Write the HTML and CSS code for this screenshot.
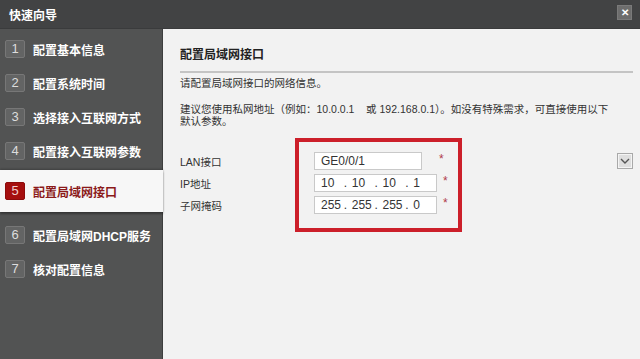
FILE: index.html
```html
<!DOCTYPE html>
<html lang="zh-CN">
<head>
  <meta charset="UTF-8">
  <title>快速向导</title>
  <link rel="stylesheet" href="styles.css">
</head>
<body>
  <div class="dialog">
    <div class="titlebar">
      <span class="title">快速向导</span>
      <span class="close">✕</span>
    </div>
    <div class="main">
      <ul class="steps">
        <li class="step"><span class="num">1</span>配置基本信息</li>
        <li class="step"><span class="num">2</span>配置系统时间</li>
        <li class="step"><span class="num">3</span>选择接入互联网方式</li>
        <li class="step"><span class="num">4</span>配置接入互联网参数</li>
        <li class="step active"><span class="num">5</span>配置局域网接口</li>
        <li class="step"><span class="num">6</span>配置局域网DHCP服务</li>
        <li class="step"><span class="num">7</span>核对配置信息</li>
      </ul>

      <div class="content">
        <h3 class="heading">配置局域网接口</h3>
        <p class="intro">请配置局域网接口的网络信息。</p>
        <p class="hint">建议您使用私网地址（例如：10.0.0.1&nbsp;&nbsp;&nbsp;&nbsp;或 192.168.0.1）。如没有特殊需求，可直接使用以下<br>默认参数。</p>

        <div class="form">
          <div class="labels">
            <div class="label">LAN接口</div>
            <div class="label">IP地址</div>
            <div class="label">子网掩码</div>
          </div>
          <div class="fields">
            <div class="row">
              <div class="input short">GE0/0/1</div>
              <span class="req wide">*</span>
            </div>
            <div class="row">
              <div class="input ip">
                <span class="oct">10</span><span class="dot">.</span><span class="oct">10</span><span class="dot">.</span><span class="oct">10</span><span class="dot">.</span><span class="oct">1</span>
              </div>
              <span class="req">*</span>
            </div>
            <div class="row">
              <div class="input ip">
                <span class="oct">255</span><span class="dot">.</span><span class="oct">255</span><span class="dot">.</span><span class="oct">255</span><span class="dot">.</span><span class="oct">0</span>
              </div>
              <span class="req">*</span>
            </div>
          </div>
          <div class="dropdown">
            <svg width="10" height="6" viewBox="0 0 10 6"><path d="M1 1 L5 5 L9 1" fill="none" stroke="#555" stroke-width="1.4"/></svg>
          </div>
        </div>
      </div>
    </div>
  </div>
</body>
</html>
```

FILE: styles.css
```css
body {
  margin: 0;
  font-family: "Liberation Sans", "Noto Sans CJK SC", sans-serif;
  font-size: 12px;
  background-color: #f2f2f2;
  color: #333;
}
.dialog {
  width: 640px;
  height: 359px;
  display: flex;
  flex-direction: column;
  overflow: hidden;
}
.titlebar {
  height: 28px;
  flex: none;
  display: flex;
  align-items: center;
  justify-content: space-between;
  padding: 0 8px 0 9px;
  background-color: #424344;
  border-bottom: 1px solid #3a3b3c;
}
.title {
  color: #fff;
  font-weight: bold;
  font-size: 12px;
}
.close {
  width: 15px;
  height: 15px;
  margin-bottom: 3px;
  background-color: #6d6d6d;
  border: 1px solid #7a7a7a;
  box-sizing: border-box;
  color: #fff;
  font-size: 10px;
  font-weight: bold;
  line-height: 13px;
  text-align: center;
}
.main {
  flex: 1;
  display: flex;
}
.steps {
  width: 162px;
  flex: none;
  margin: 0;
  padding: 3px 0 0;
  list-style: none;
  background-color: #525353;
  border-right: 1px solid #3d3e3e;
}
.step {
  height: 34px;
  display: flex;
  align-items: center;
  padding-left: 5px;
  color: #fff;
  font-weight: bold;
  font-size: 12px;
  white-space: nowrap;
}
.num {
  width: 20px;
  height: 18px;
  margin-right: 8px;
  box-sizing: border-box;
  border: 1px solid #777;
  border-radius: 2px;
  background-color: #636464;
  color: #ddd;
  font-weight: normal;
  font-size: 13px;
  text-align: center;
  line-height: 16px;
}
.step.active {
  height: 42px;
  margin: 2px -1px 6px 0;
  background-color: #f7f7f7;
  color: #8b1a1a;
  box-shadow: 0 2px 2px rgba(0, 0, 0, 0.35), 0 -1px 2px rgba(0, 0, 0, 0.25);
}
.step.active .num {
  background-color: #a50f0f;
  border-color: #8d0b0b;
  color: #f0d0d0;
}
.content {
  flex: 1;
  padding: 18px 7px 0 17px;
  font-size: 10.5px;
}
.heading {
  margin: 0;
  padding-bottom: 8px;
  font-size: 12px;
  line-height: 16px;
  font-weight: bold;
  color: #222;
  border-bottom: 2px solid #c4c4c4;
}
.intro {
  margin: 3px 0 0;
  line-height: 14px;
}
.hint {
  margin: 13px 0 0;
  line-height: 12px;
  white-space: nowrap;
}
.form {
  display: flex;
  margin-top: 11px;
}
.labels {
  width: 115px;
  padding-top: 13px;
}
.label {
  height: 22px;
  line-height: 22px;
}
.fields {
  width: 167px;
  height: 94px;
  box-sizing: border-box;
  border: 4px solid #cc1f2a;
  padding: 10px 0 0 15px;
  font-size: 12px;
}
.row {
  height: 22px;
  display: flex;
  align-items: flex-start;
}
.input {
  height: 18px;
  box-sizing: border-box;
  border: 1px solid #c9c9c9;
  background-color: #fff;
  padding-left: 6px;
  line-height: 16px;
  color: #333;
}
.short {
  width: 108px;
}
.ip {
  width: 123px;
  display: flex;
}
.oct {
  width: 23px;
}
.dot {
  width: 8px;
}
.req {
  margin-left: 6px;
  color: #b03a4a;
}
.req.wide {
  margin-left: 17px;
}
.dropdown {
  margin: 15px 0 0 auto;
  width: 16px;
  height: 16px;
  box-sizing: border-box;
  border: 1px solid #a9a9a9;
  background-color: #dedede;
  box-shadow: inset 0 0 0 1px #f4f4f4;
  display: flex;
  align-items: center;
  justify-content: center;
}
```
